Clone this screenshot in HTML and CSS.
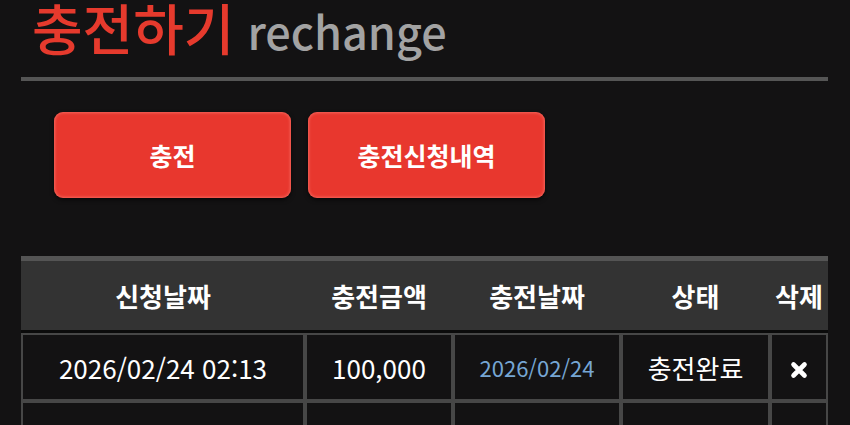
FILE: index.html
```html
<!DOCTYPE html>
<html lang="ko">
<head>
  <meta charset="UTF-8">
  <meta name="viewport" content="width=device-width, initial-scale=1.0">
  <title>충전하기</title>
  <link rel="stylesheet" href="styles.css">
</head>
<body>
  <div class="container">
    <h1 class="page-title">충전하기<span class="sub">rechange</span></h1>

    <div class="tabs">
      <button class="btn">충전</button>
      <button class="btn">충전신청내역</button>
    </div>

    <table class="history">
      <colgroup>
        <col class="c-req">
        <col class="c-amount">
        <col class="c-date">
        <col class="c-state">
        <col class="c-del">
      </colgroup>
      <thead>
        <tr>
          <th>신청날짜</th>
          <th>충전금액</th>
          <th>충전날짜</th>
          <th>상태</th>
          <th>삭제</th>
        </tr>
      </thead>
      <tbody>
        <tr>
          <td>2026/02/24 02:13</td>
          <td>100,000</td>
          <td class="done-date">2026/02/24</td>
          <td>충전완료</td>
          <td>
            <svg class="del" width="18" height="18" viewBox="0 0 18 18">
              <path d="M3.5 3.5 L14.5 14.5 M14.5 3.5 L3.5 14.5" stroke="#fff" stroke-width="4.6" stroke-linecap="round"/>
            </svg>
          </td>
        </tr>
        <tr>
          <td></td>
          <td></td>
          <td></td>
          <td></td>
          <td></td>
        </tr>
      </tbody>
    </table>
  </div>
</body>
</html>
```

FILE: styles.css
```css
body {
  margin: 0;
  background-color: #131213;
  font-family: "Noto Sans CJK KR", "Noto Sans", sans-serif;
  color: #fff;
}

.container {
  width: 807px;
  margin-left: 21px;
}

.page-title {
  margin: 0;
  padding: 0 0 24px 11px;
  font-size: 55px;
  font-weight: 500;
  line-height: 53px;
  color: #e63a2d;
  border-bottom: 4px solid #555;
  white-space: nowrap;
}

.page-title .sub {
  margin-left: 13px;
  font-size: 45px;
  line-height: 1;
  color: #a3a3a3;
}

.tabs {
  display: flex;
  gap: 17px;
  margin: 31px 0 0 33px;
}

.btn {
  width: 237px;
  height: 86px;
  border: none;
  border-radius: 9px;
  background-color: #e8372e;
  color: #fff;
  font-family: inherit;
  font-size: 25px;
  font-weight: 700;
  box-shadow: inset 0 0 3px 1px rgba(255, 140, 130, 0.55), 0 2px 4px rgba(0, 0, 0, 0.6);
  cursor: pointer;
}

.history {
  margin-top: 58px;
  width: 807px;
  border-collapse: separate;
  border-spacing: 0;
  table-layout: fixed;
}

.c-req { width: 284px; }
.c-amount { width: 148px; }
.c-date { width: 168px; }
.c-state { width: 149px; }
.c-del { width: 58px; }

.history th {
  height: 69px;
  padding: 0;
  background-color: #333;
  border-top: 5px solid #545454;
  border-bottom: 3px solid #0b0b0b;
  font-size: 26px;
  font-weight: 700;
  white-space: nowrap;
}

.history td {
  height: 64px;
  padding: 0;
  border: 2px solid #474747;
  background-color: #131213;
  text-align: center;
  font-size: 26px;
  font-weight: 400;
  white-space: nowrap;
}

.history td.done-date {
  color: #76a6d4;
  font-size: 22px;
}

.del {
  display: block;
  margin: 5px auto 0;
}
```
